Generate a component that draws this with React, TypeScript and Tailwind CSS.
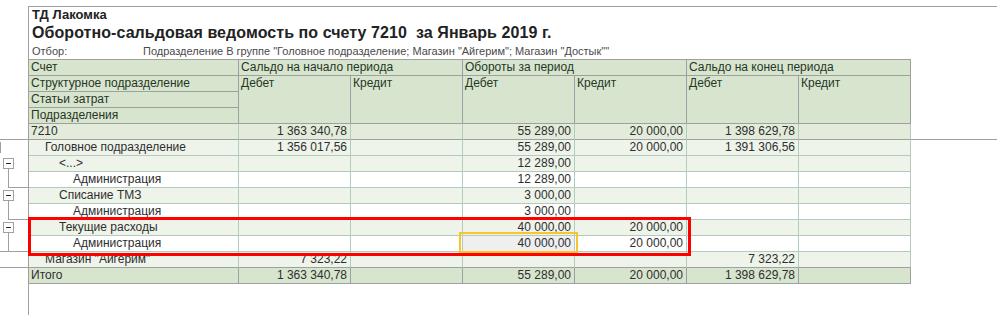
import React from "react";

type Row = {
  label: string;
  lvl: number;
  vals: string[];
  kind: "top" | "light" | "white" | "total";
  bottomGray?: boolean;
  sel?: number;
};

const rows: Row[] = [
  { label: "7210", lvl: 0, vals: ["1 363 340,78", "", "55 289,00", "20 000,00", "1 398 629,78", ""], kind: "top", bottomGray: true },
  { label: "Головное подразделение", lvl: 1, vals: ["1 356 017,56", "", "55 289,00", "20 000,00", "1 391 306,56", ""], kind: "light" },
  { label: "<...>", lvl: 2, vals: ["", "", "12 289,00", "", "", ""], kind: "light" },
  { label: "Администрация", lvl: 3, vals: ["", "", "12 289,00", "", "", ""], kind: "white" },
  { label: "Списание ТМЗ", lvl: 2, vals: ["", "", "3 000,00", "", "", ""], kind: "light" },
  { label: "Администрация", lvl: 3, vals: ["", "", "3 000,00", "", "", ""], kind: "white" },
  { label: "Текущие расходы", lvl: 2, vals: ["", "", "40 000,00", "20 000,00", "", ""], kind: "light" },
  { label: "Администрация", lvl: 3, vals: ["", "", "40 000,00", "20 000,00", "", ""], kind: "white", sel: 2 },
  { label: "Магазин \"Айгерим\"", lvl: 1, vals: ["7 323,22", "", "", "", "7 323,22", ""], kind: "light", bottomGray: true },
  { label: "Итого", lvl: 0, vals: ["1 363 340,78", "", "55 289,00", "20 000,00", "1 398 629,78", ""], kind: "total", bottomGray: true },
];

const indent = ["pl-[2px]", "pl-[16px]", "pl-[30px]", "pl-[44px]"];

function bgFor(kind: Row["kind"]) {
  if (kind === "top") return "bg-[#e3ecda]";
  if (kind === "light") return "bg-[#eef4ea]";
  if (kind === "total") return "bg-[#d8e5ce]";
  return "bg-white";
}

function DataRow({ r }: { r: Row }) {
  const bg = bgFor(r.kind);
  const vcol = r.kind === "total" ? "border-r-[#a0a0a0]" : "border-r-[#b3cbbd]";
  const bcol = r.bottomGray ? "border-b-[#a0a0a0]" : "border-b-[#b3cbbd]";
  return (
    <div className="flex h-[16px] text-[12px] leading-[15px] text-[#2e2e2e]">
      <div className={`w-[210px] shrink-0 border-r border-b ${vcol} ${bcol} ${bg} ${indent[r.lvl]} whitespace-nowrap overflow-hidden`}>
        {r.label}
      </div>
      {r.vals.map((v, i) => (
        <div
          key={i}
          className={`w-[112px] shrink-0 border-r border-b ${vcol} ${bcol} ${r.sel === i ? "bg-[#efefef]" : bg} pr-[3px] text-right whitespace-nowrap`}
        >
          {v}
        </div>
      ))}
      <div className={`flex-1 ${r.kind === "top" ? "border-b border-b-[#a0a0a0]" : ""}`} />
    </div>
  );
}

const hc = "border-r border-b border-[#a0a0a0] bg-[#d8e5ce] pl-[2px] text-[12px] leading-[15px] text-[#263626] whitespace-nowrap overflow-hidden";

export default function App() {
  return (
    <div className="relative w-[997px] h-[315px] overflow-hidden bg-white pt-[6px] font-['Liberation_Sans',Arial,sans-serif]">
      <div className="flex h-full">
        <div className="w-[28px] shrink-0" />
        <div className="flex-1 flex flex-col border-l border-t border-[#a0a0a0]">
          <div className="h-[52px] pl-[3px] flex flex-col text-[#222]">
            <div className="h-[16px] text-[13px] font-bold leading-[16px]">ТД Лакомка</div>
            <div className="h-[20px] text-[16px] font-bold leading-[20px] tracking-[0.07px] whitespace-pre">
              Оборотно-сальдовая ведомость по счету 7210  за Январь 2019 г.
            </div>
            <div className="h-[16px] flex text-[11px] leading-[16px] text-[#4a4a4a]">
              <div className="w-[111px] shrink-0">Отбор:</div>
              <div className="whitespace-nowrap">
                Подразделение В группе "Головное подразделение; Магазин "Айгерим"; Магазин "Достык""
              </div>
            </div>
          </div>

          <div className="grid w-[882px] grid-cols-[210px_112px_112px_112px_112px_112px_112px] grid-rows-[16px_16px_16px_16px] border-t border-[#a0a0a0]">
            <div className={`${hc} col-start-1 row-start-1`}>Счет</div>
            <div className={`${hc} col-start-2 col-span-2 row-start-1`}>Сальдо на начало периода</div>
            <div className={`${hc} col-start-4 col-span-2 row-start-1`}>Обороты за период</div>
            <div className={`${hc} col-start-6 col-span-2 row-start-1`}>Сальдо на конец периода</div>
            <div className={`${hc} col-start-1 row-start-2`}>Структурное подразделение</div>
            <div className={`${hc} col-start-1 row-start-3`}>Статьи затрат</div>
            <div className={`${hc} col-start-1 row-start-4`}>Подразделения</div>
            <div className={`${hc} col-start-2 row-start-2 row-span-3`}>Дебет</div>
            <div className={`${hc} col-start-3 row-start-2 row-span-3`}>Кредит</div>
            <div className={`${hc} col-start-4 row-start-2 row-span-3`}>Дебет</div>
            <div className={`${hc} col-start-5 row-start-2 row-span-3`}>Кредит</div>
            <div className={`${hc} col-start-6 row-start-2 row-span-3`}>Дебет</div>
            <div className={`${hc} col-start-7 row-start-2 row-span-3`}>Кредит</div>
          </div>

          {rows.map((r, i) => (
            <DataRow key={i} r={r} />
          ))}
        </div>
      </div>

      {/* grouping tree in the left gutter */}
      <svg className="absolute left-0 top-0" width="29" height="315" viewBox="0 0 29 315">
        <g stroke="#a0a0a0" strokeWidth="1" fill="none" shapeRendering="crispEdges">
          <line x1="0" y1="139.5" x2="28" y2="139.5" />
          <rect x="-9.5" y="142.5" width="10" height="10" fill="#fff" />
          <line x1="8.5" y1="168.5" x2="8.5" y2="187.5" />
          <line x1="8.5" y1="187.5" x2="28" y2="187.5" />
          <line x1="8.5" y1="200.5" x2="8.5" y2="219.5" />
          <line x1="8.5" y1="219.5" x2="28" y2="219.5" />
          <line x1="8.5" y1="232.5" x2="8.5" y2="251.5" />
          <line x1="0" y1="251.5" x2="28" y2="251.5" />
          <line x1="0" y1="267.5" x2="28" y2="267.5" />
          <rect x="3.5" y="158.5" width="10" height="10" fill="#fff" />
          <rect x="3.5" y="190.5" width="10" height="10" fill="#fff" />
          <rect x="3.5" y="222.5" width="10" height="10" fill="#fff" />
        </g>
        <g stroke="#222" strokeWidth="1" shapeRendering="crispEdges">
          <line x1="6" y1="163.5" x2="11" y2="163.5" />
          <line x1="6" y1="195.5" x2="11" y2="195.5" />
          <line x1="6" y1="227.5" x2="11" y2="227.5" />
        </g>
      </svg>

      {/* selected cell frame */}
      <div className="absolute left-[459px] top-[232px] w-[119px] h-[21px] border-2 border-[#f7c52e]" />
      {/* red highlight annotation */}
      <div className="absolute left-[28px] top-[217px] w-[663px] h-[39px] border-[3px] border-[#ff0000]" />
    </div>
  );
}
